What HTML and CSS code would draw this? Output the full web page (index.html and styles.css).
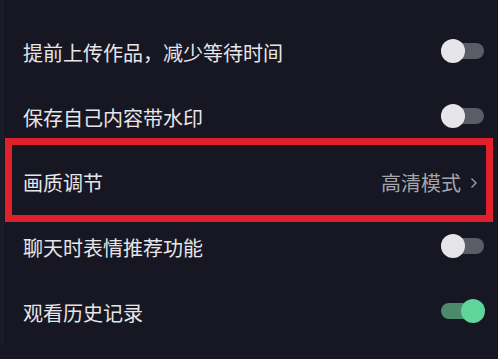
FILE: index.html
```html
<!DOCTYPE html>
<html lang="zh">

<head>
    <meta charset="utf-8">
    <meta name="viewport" content="width=device-width, initial-scale=1.0">
    <title>设置</title>
    <link rel="stylesheet" href="styles.css">
</head>

<body>

    <div class="liste">
        <div class="raekke">
            <span class="tekst">提前上传作品，减少等待时间</span>
            <span class="kontakt"><span class="knap"></span></span>
        </div>

        <div class="raekke">
            <span class="tekst">保存自己内容带水印</span>
            <span class="kontakt"><span class="knap"></span></span>
        </div>

        <div class="raekke valgt">
            <span class="tekst">画质调节</span>
            <span class="vaerdi">高清模式
                <svg class="pil" width="8" height="12" viewBox="0 0 8 12">
                    <path d="M1.5 1.5 L6 6 L1.5 10.5" fill="none" stroke="#8e8f96" stroke-width="1.6" />
                </svg>
            </span>
            <div class="ramme"></div>
        </div>

        <div class="raekke">
            <span class="tekst">聊天时表情推荐功能</span>
            <span class="kontakt"><span class="knap"></span></span>
        </div>

        <div class="raekke">
            <span class="tekst">观看历史记录</span>
            <span class="kontakt til"><span class="knap"></span></span>
        </div>
    </div>

</body>

</html>
```

FILE: styles.css
```css
* {
    box-sizing: border-box;
    padding: 0;
    margin: 0;
}

body {
    background: #161722;
    font-family: "Noto Sans CJK SC", "Noto Sans", sans-serif;
    width: 498px;
    height: 359px;
    overflow: hidden;
}

.liste {
    padding-top: 20px;
    border-left: 4px solid #1b1c28;
}

.raekke {
    position: relative;
    display: flex;
    align-items: center;
    justify-content: space-between;
    height: 65px;
    padding: 0 14px 0 19px;
}

.tekst {
    color: #e6e6ea;
    font-size: 20px;
    line-height: 1;
}

.vaerdi {
    display: flex;
    align-items: center;
    gap: 9px;
    color: #a4a5ab;
    font-size: 20px;
    line-height: 1;
    padding-right: 6px;
}

/* kontakt */
.kontakt {
    position: relative;
    display: block;
    width: 43px;
    height: 16px;
    border-radius: 8px;
    background: #5b5c65;
    margin-top: -4px;
}

.knap {
    position: absolute;
    left: 0;
    top: -4px;
    width: 24px;
    height: 24px;
    border-radius: 50%;
    background: #e6e6ea;
}

.kontakt.til {
    background: #4b8a6d;
}

.kontakt.til .knap {
    left: auto;
    right: -1px;
    background: #5fd59b;
}

/* rød markering */
.ramme {
    position: absolute;
    top: -12px;
    bottom: -7px;
    left: 1px;
    right: 5px;
    border: 7px solid #e0202a;
    pointer-events: none;
}
```
